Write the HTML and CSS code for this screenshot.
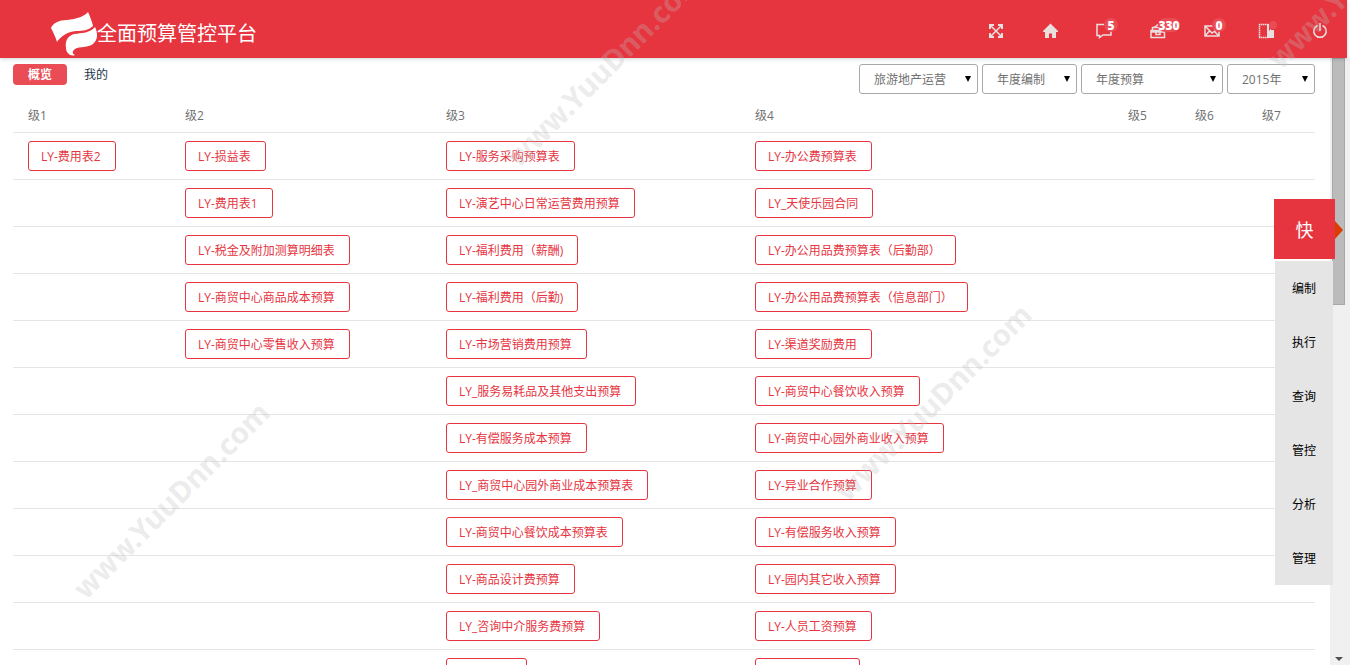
FILE: index.html
```html
<!DOCTYPE html>
<html lang="zh-CN">
<head>
<meta charset="utf-8">
<meta name="viewport" content="width=device-width, initial-scale=1">
<title>全面预算管控平台</title>
<link rel="stylesheet" href="styles.css">
</head>
<body>
<header class="topbar">
  <div class="brand">
    <svg class="logo" viewBox="0 0 48 46" aria-hidden="true">
      <path fill="#fff" d="M1 17C3 12 9 9 17 9C27 8 35 5 38 1C39 3 42 10 43 15C39 19 34 20 26 20C17 21 11 25 7 31C6 27 3 21 1 17Z"/>
      <path fill="#fff" d="M45 16C48 22 48 29 43 33C38 37 30 35 25 38C22 40 22 43 25 44C21 46 16 42 16 37C15 31 17 25 24 23C32 22 40 22 45 16Z"/>
    </svg>
    <h1 class="title">全面预算管控平台</h1>
  </div>
  <nav class="tools">
    <button class="tool" aria-label="全屏">
      <svg class="icon" viewBox="0 0 16 16"><path fill="none" stroke="currentColor" stroke-width="2" d="M6 2H2V6M10 2H14V6M6 14H2V10M10 14H14V10"/><path stroke="currentColor" stroke-width="1.5" d="M2 2L14 14M14 2L2 14"/></svg>
    </button>
    <button class="tool" aria-label="首页">
      <svg class="icon" viewBox="0 0 16 16"><path fill="currentColor" d="M8.500 .5L16 8V9H14V15H10V10.500H7V15H3V9H1V8Z"/></svg>
    </button>
    <button class="tool" aria-label="消息">
      <svg class="icon" viewBox="0 0 16 16"><path fill="none" stroke="currentColor" stroke-width="1.500" d="M8 1.500H1V12.500H3.500V14.500L7 12H15V8"/></svg>
      <span class="badge">5</span>
    </button>
    <button class="tool" aria-label="任务">
      <svg class="icon" viewBox="0 0 16 16"><path fill="none" stroke="currentColor" stroke-width="1.500" d="M8 1.500L4 4.500M2.500 7V4.500H13V7M1 7.500H14.500V14.500H1ZM1 9H14.500M6 9V11.500H10V9"/></svg>
      <span class="badge wide">330</span>
    </button>
    <button class="tool" aria-label="邮件">
      <svg class="icon" viewBox="0 0 16 16"><path fill="none" stroke="currentColor" stroke-width="1.500" d="M9 3H1V13H15V8M1 3L8 10L15 5M1 13L5.500 8M15 13L10.500 8.500"/></svg>
      <span class="badge">0</span>
    </button>
    <button class="tool" aria-label="通讯录">
      <svg class="icon" viewBox="0 0 16 16"><path fill="none" stroke="currentColor" stroke-width="1.500" stroke-dasharray="1.500 .5" d="M1 1.500H10M1 14.500H10M1.500 1V15"/><path stroke="currentColor" stroke-width="2" d="M10 1V15"/><path fill="currentColor" d="M11 15V8L13 5.500V7H16V15Z"/></svg>
      <span class="badge dot"></span>
    </button>
    <button class="tool" aria-label="退出">
      <svg class="icon" viewBox="0 0 16 16"><path fill="none" stroke="currentColor" stroke-width="1.500" d="M5.500 2.500A6.200 6.200 0 1 0 10.500 2.500M8 0V8"/></svg>
    </button>
  </nav>
</header>
<div class="body">
  <main class="content">
    <div class="filterbar">
      <div class="tabs">
        <button class="tab active">概览</button>
        <button class="tab">我的</button>
      </div>
      <form class="filters">
        <span class="pick company"><select aria-label="公司"><option>旅游地产运营</option></select></span>
        <span class="pick stage"><select aria-label="阶段"><option>年度编制</option></select></span>
        <span class="pick kind"><select aria-label="预算类型"><option>年度预算</option></select></span>
        <span class="pick year"><select aria-label="年度"><option>2015年</option></select></span>
      </form>
    </div>
    <table class="levels">
      <colgroup><col class="c1"><col class="c2"><col class="c3"><col class="c4"><col class="c5"><col class="c5"><col class="c7"></colgroup>
      <thead><tr><th>级1</th><th>级2</th><th>级3</th><th>级4</th><th>级5</th><th>级6</th><th>级7</th></tr></thead>
      <tbody>
        <tr><td><button class="form">LY-费用表2</button></td><td><button class="form">LY-损益表</button></td><td><button class="form">LY-服务采购预算表</button></td><td><button class="form">LY-办公费预算表</button></td><td></td><td></td><td></td></tr>
        <tr><td></td><td><button class="form">LY-费用表1</button></td><td><button class="form">LY-演艺中心日常运营费用预算</button></td><td><button class="form">LY_天使乐园合同</button></td><td></td><td></td><td></td></tr>
        <tr><td></td><td><button class="form">LY-税金及附加测算明细表</button></td><td><button class="form">LY-福利费用（薪酬)</button></td><td><button class="form">LY-办公用品费预算表（后勤部）</button></td><td></td><td></td><td></td></tr>
        <tr><td></td><td><button class="form">LY-商贸中心商品成本预算</button></td><td><button class="form">LY-福利费用（后勤)</button></td><td><button class="form">LY-办公用品费预算表（信息部门）</button></td><td></td><td></td><td></td></tr>
        <tr><td></td><td><button class="form">LY-商贸中心零售收入预算</button></td><td><button class="form">LY-市场营销费用预算</button></td><td><button class="form">LY-渠道奖励费用</button></td><td></td><td></td><td></td></tr>
        <tr><td></td><td></td><td><button class="form">LY_服务易耗品及其他支出预算</button></td><td><button class="form">LY-商贸中心餐饮收入预算</button></td><td></td><td></td><td></td></tr>
        <tr><td></td><td></td><td><button class="form">LY-有偿服务成本预算</button></td><td><button class="form">LY-商贸中心园外商业收入预算</button></td><td></td><td></td><td></td></tr>
        <tr><td></td><td></td><td><button class="form">LY_商贸中心园外商业成本预算表</button></td><td><button class="form">LY-异业合作预算</button></td><td></td><td></td><td></td></tr>
        <tr><td></td><td></td><td><button class="form">LY-商贸中心餐饮成本预算表</button></td><td><button class="form">LY-有偿服务收入预算</button></td><td></td><td></td><td></td></tr>
        <tr><td></td><td></td><td><button class="form">LY-商品设计费预算</button></td><td><button class="form">LY-园内其它收入预算</button></td><td></td><td></td><td></td></tr>
        <tr><td></td><td></td><td><button class="form">LY_咨询中介服务费预算</button></td><td><button class="form">LY-人员工资预算</button></td><td></td><td></td><td></td></tr>
        <tr><td></td><td></td><td><button class="form">LY-折旧费</button></td><td><button class="form">LY-差旅费预算</button></td><td></td><td></td><td></td></tr>
      </tbody>
    </table>
  </main>
  <div class="track"><div class="thumb"></div><div class="down"></div></div>
</div>
<aside class="quick">
  <button class="quick-head">快</button>
  <nav class="quick-menu">
    <a href="#edit">编制</a><a href="#run">执行</a><a href="#query">查询</a><a href="#control">管控</a><a href="#analyse">分析</a><a href="#manage">管理</a>
  </nav>
</aside>
<div class="marks" aria-hidden="true">
  <span class="mark m1">www.YuuDnn.com</span>
  <span class="mark m2">www.YuuDnn.com</span>
  <span class="mark m3">www.YuuDnn.com</span>
  <span class="mark m4">www.YuuDnn.com</span>
</div>
</body>
</html>
```

FILE: styles.css
```css
* { box-sizing: border-box; }

body {
  margin: 0;
  height: 100vh;
  overflow: hidden;
  display: flex;
  flex-direction: column;
  position: relative;
  background: #fff;
  color: #707070;
  font: 12px/18px "Open Sans", "Noto Sans CJK SC", sans-serif;
}

button, select { font: inherit; color: inherit; cursor: pointer; }

.topbar {
  flex: none;
  height: 58px;
  margin-right: 3px;
  display: flex;
  justify-content: space-between;
  background: #e6353f;
  box-shadow: 0 1px 4px rgba(0, 40, 60, .2);
  z-index: 1;
}
.brand { display: flex; align-items: center; padding: 10px 0 0 50px; }
.logo { width: 48px; height: 46px; }
.title { margin: 0 0 0 -1px; color: #fff; font-size: 20px; line-height: 28px; font-weight: 400; }

.tools { display: flex; align-items: center; padding-top: 4px; }
.tool {
  position: relative;
  width: 54px;
  height: 54px;
  padding: 0;
  border: 0;
  background: none;
  color: #eadfdf;
  display: flex;
  align-items: center;
  justify-content: center;
}
.icon { width: 16px; height: 16px; }
.badge {
  position: absolute;
  left: 27px;
  top: 14px;
  min-width: 14px;
  height: 14px;
  border-radius: 7px;
  background: #ea4c55;
  color: #fff;
  font-size: 12px;
  line-height: 16px;
  font-weight: 800;
  text-align: center;
}
.wide { min-width: 22px; }
.dot { min-width: 8px; width: 8px; height: 8px; left: 30px; top: 17px; }

.body { flex: 1; min-height: 0; display: flex; }
.content { flex: 1; min-width: 0; padding: 6px 15px 0 13px; overflow: hidden; }

.filterbar { display: flex; justify-content: space-between; align-items: flex-start; }
.tabs { display: flex; gap: 4px; }
.tab {
  height: 21px;
  padding: 0 13px;
  border: 0;
  border-radius: 4px;
  background: none;
  color: #22354a;
}
.active { width: 54px; background: #ea4c55; color: #fff; font-weight: 700; }

.filters { display: flex; gap: 4px; }
.pick { position: relative; height: 30px; }
.pick select {
  appearance: none;
  width: 100%;
  height: 30px;
  padding: 2px 24px 0 14px;
  border: 1px solid #a9a9a9;
  border-radius: 3px;
  background: #fff;
}
.pick::after {
  content: "";
  position: absolute;
  right: 7px;
  top: 12px;
  border: 3px solid transparent;
  border-top: 6px solid #000;
  border-bottom: 0;
  pointer-events: none;
}
.company { width: 119px; }
.stage { width: 95px; }
.kind { width: 142px; }
.year { width: 88px; }

.levels { width: 100%; margin-top: 5px; table-layout: fixed; border-collapse: separate; border-spacing: 0; }
.c1 { width: 157px; }
.c2 { width: 261px; }
.c3 { width: 309px; }
.c4 { width: 373px; }
.c5 { width: 67px; }
.c7 { width: 68px; }
.levels th { height: 34px; padding: 0 15px; border-bottom: 1px solid #e5e5e5; text-align: left; font-weight: 400; }
.levels td { height: 47px; padding: 8px 15px; border-bottom: 1px solid #e5e5e5; white-space: nowrap; }
.form {
  display: block;
  height: 30px;
  padding: 2px 14px 0 12px;
  border: 1px solid #e6353f;
  border-radius: 3px;
  background: #fff;
  color: #e6353f;
}

.track {
  flex: none;
  width: 20px;
  padding: 0 5px 4px 2px;
  display: flex;
  flex-direction: column;
  justify-content: space-between;
  background: #f0f0f0;
}
.thumb { height: 41%; border: 1px solid #a8a8a8; background: #bbb; }
.down { align-self: center; border: 4px solid transparent; border-top-color: #505050; border-bottom: 0; }

.quick { position: absolute; right: 15px; top: 199px; width: 61px; z-index: 2; }
.quick-head {
  position: relative;
  display: block;
  width: 61px;
  height: 60px;
  padding: 2px 0 0;
  border: 0;
  background: #e6353f;
  color: #fff;
  font-size: 18px;
}
.quick-head::after {
  content: "";
  position: absolute;
  left: 100%;
  top: 22px;
  border: 9px solid transparent;
  border-left: 8px solid #dd3c00;
  border-right: 0;
}
.quick-menu { margin: 2px 2px 0 1px; background: #e5e5e5; display: flex; flex-direction: column; }
.quick-menu a { height: 54px; line-height: 56px; text-align: center; color: #000; text-decoration: none; }

.marks { position: absolute; inset: 0; overflow: hidden; pointer-events: none; z-index: 3; }
.mark {
  position: absolute;
  width: 280px;
  margin: -20px 0 0 -140px;
  text-align: center;
  color: rgba(190, 190, 190, .3);
  font: 700 29px/40px "Noto Sans", sans-serif;
  transform: rotate(-45deg);
}
.m1 { left: 171px; top: 500px; }
.m2 { left: 604px; top: 68px; }
.m3 { left: 933px; top: 402px; }
.m4 { left: 1366px; top: -30px; }
```
